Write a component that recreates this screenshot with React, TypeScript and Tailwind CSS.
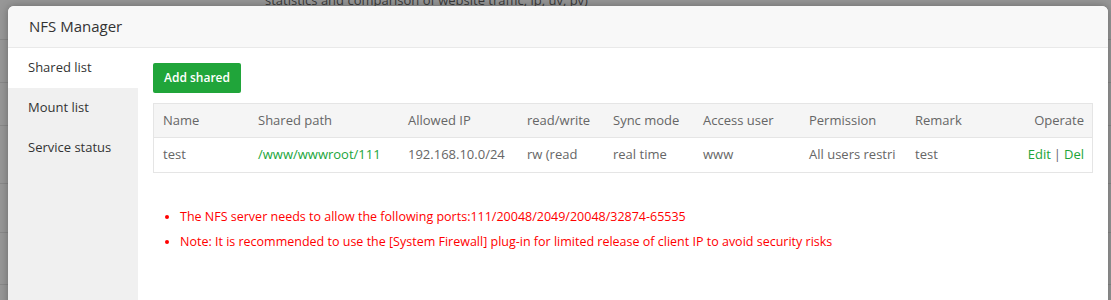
import React from "react";

const cols = [
  { key: "name", label: "Name", w: "w-[95px]" },
  { key: "path", label: "Shared path", w: "w-[150px]" },
  { key: "ip", label: "Allowed IP", w: "w-[119px]" },
  { key: "rw", label: "read/write", w: "w-[86px]" },
  { key: "sync", label: "Sync mode", w: "w-[90px]" },
  { key: "user", label: "Access user", w: "w-[106px]" },
  { key: "perm", label: "Permission", w: "w-[106px]" },
  { key: "remark", label: "Remark", w: "w-[100px]" },
];

const row: Record<string, string> = {
  name: "test",
  path: "/www/wwwroot/111",
  ip: "192.168.10.0/24",
  rw: "rw (read",
  sync: "real time",
  user: "www",
  perm: "All users restri",
  remark: "test",
};

const bgRows = ["h-[40px]", "h-[43px]", "h-[43px]", "h-[58px]", "h-[49px]", "h-[52px]"];

const App = () => {
  return (
    <div
      className="relative w-[1111px] h-[300px] overflow-hidden bg-[#979797]"
      style={{ fontFamily: '"Open Sans", "Noto Sans", sans-serif' }}
    >
      {/* dimmed page behind the dialog */}
      <div className="flex flex-col">
        {bgRows.map((h, i) => (
          <div key={i} className={`${h} border-b border-[#888] flex`}>
            {i === 0 && (
              <div className="ml-[265px] -mt-[9px] text-[13px] text-[#3a3a3a]">
                statistics and comparison of website traffic, ip, uv, pv)
              </div>
            )}
          </div>
        ))}
      </div>

      {/* dialog */}
      <div className="absolute left-[8px] top-[6px] w-[1100px] h-[310px] bg-white rounded-t-[6px] overflow-hidden shadow-[0_0_8px_rgba(0,0,0,0.3)] flex flex-col">
        <div className="h-[42px] shrink-0 bg-[#f8f8f8] border-b border-[#e9e9e9] flex items-center pl-[21px] text-[15px] text-[#333]">
          NFS Manager
        </div>
        <div className="flex flex-1">
          <div className="w-[130px] shrink-0 bg-[#f0f0f0] text-[13px] text-[#333] flex flex-col">
            <div className="h-[40px] bg-white flex items-center pl-[20px]">Shared list</div>
            <div className="h-[40px] flex items-center pl-[20px]">Mount list</div>
            <div className="h-[40px] flex items-center pl-[20px]">Service status</div>
          </div>
          <div className="flex-1 flex flex-col items-start gap-[10px] px-[15px] pt-[15px]">
            <button className="h-[30px] w-[88px] rounded-[2px] bg-[#20a53a] text-white text-[12px] font-semibold">
              Add shared
            </button>
            <div className="w-[940px] border border-[#e5e5e5] text-[13px] text-[#666]">
              <div className="flex h-[34px] items-center bg-[#f5f5f5] border-b border-[#e5e5e5]">
                {cols.map((c) => (
                  <div key={c.key} className={`${c.w} pl-[9px] shrink-0`}>
                    {c.label}
                  </div>
                ))}
                <div className="flex-1 text-right pr-[8px]">Operate</div>
              </div>
              <div className="flex h-[34px] items-center">
                {cols.map((c) => (
                  <div
                    key={c.key}
                    className={`${c.w} pl-[9px] shrink-0 whitespace-nowrap overflow-hidden ${
                      c.key === "path" ? "text-[#20a53a]" : ""
                    }`}
                  >
                    {row[c.key]}
                  </div>
                ))}
                <div className="flex-1 flex justify-end gap-[3px] pr-[8px]">
                  <span className="text-[#20a53a]">Edit</span>
                  <span className="text-[#666]">|</span>
                  <span className="text-[#20a53a]">Del</span>
                </div>
              </div>
            </div>
            <ul className="mt-[21px] pl-[27px] text-[12.5px] text-[#ff0000] list-disc leading-[25px]">
              <li>The NFS server needs to allow the following ports:111/20048/2049/20048/32874-65535</li>
              <li>Note: It is recommended to use the [System Firewall] plug-in for limited release of client IP to avoid security risks</li>
            </ul>
          </div>
        </div>
      </div>
    </div>
  );
};

export default App;
